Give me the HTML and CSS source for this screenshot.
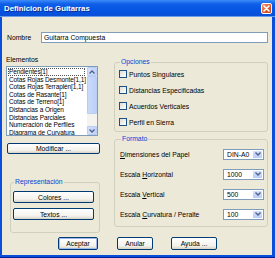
FILE: index.html
```html
<!DOCTYPE html>
<html lang="es">
<head>
    <meta charset="UTF-8">
    <title>Definicion de Guitarras</title>
    <link rel="stylesheet" href="styles.css">
</head>
<body>
<div class="window">
    <div class="titlebar">
        <span class="title">Definicion de Guitarras</span>
        <span class="close">
            <svg width="9" height="9" viewBox="0 0 9 9"><path d="M2 2 L7 7 M7 2 L2 7" stroke="#fff" stroke-width="1.6" stroke-linecap="round"/></svg>
        </span>
    </div>
    <div class="client">
        <!-- Nombre -->
        <div class="name-row">
            <span class="name-label">Nombre</span>
            <div class="textbox">Guitarra Compuesta</div>
        </div>

        <div class="main">
            <div class="left">
                <div class="caption">Elementos</div>
                <div class="listbox">
                    <ul class="items">
                        <li class="focused">Pendientes[1]</li>
                        <li>Cotas Rojas Desmonte[1,1]</li>
                        <li>Cotas Rojas Terraplén[1,1]</li>
                        <li>Cotas de Rasante[1]</li>
                        <li>Cotas de Terreno[1]</li>
                        <li>Distancias a Origen</li>
                        <li>Distancias Parciales</li>
                        <li>Numeración de Perfiles</li>
                        <li>Diagrama de Curvatura</li>
                    </ul>
                    <div class="vscroll">
                        <span class="sb-btn"><svg width="6" height="4" viewBox="0 0 6 4"><path d="M0.5 3.5 L3 1 L5.5 3.5" fill="none" stroke="#4D6185" stroke-width="1.3"/></svg></span>
                        <span class="sb-thumb"></span>
                        <span class="sb-track"></span>
                        <span class="sb-btn"><svg width="6" height="4" viewBox="0 0 6 4"><path d="M0.5 0.5 L3 3 L5.5 0.5" fill="none" stroke="#4D6185" stroke-width="1.3"/></svg></span>
                    </div>
                </div>
                <button class="btn modify">Modificar ...</button>

                <fieldset class="group repr">
                    <legend>Representación</legend>
                    <button class="btn">Colores ...</button>
                    <button class="btn">Textos ...</button>
                </fieldset>
            </div>

            <div class="right">
                <fieldset class="group options">
                    <legend>Opciones</legend>
                    <div class="check-row"><span class="checkbox"></span>Puntos Singulares</div>
                    <div class="check-row"><span class="checkbox"></span>Distancias Especificadas</div>
                    <div class="check-row"><span class="checkbox"></span>Acuerdos Verticales</div>
                    <div class="check-row"><span class="checkbox"></span>Perfil en Sierra</div>
                </fieldset>

                <fieldset class="group format">
                    <legend>Formato</legend>
                    <div class="field-row">
                        <span><u>D</u>imensiones del Papel</span>
                        <div class="combo"><span class="value">DIN-A0</span><span class="drop"><svg width="6" height="4" viewBox="0 0 6 4"><path d="M0.5 0.5 L3 3 L5.5 0.5" fill="none" stroke="#4D6185" stroke-width="1.3"/></svg></span></div>
                    </div>
                    <div class="field-row">
                        <span>Escala <u>H</u>orizontal</span>
                        <div class="combo"><span class="value">1000</span><span class="drop"><svg width="6" height="4" viewBox="0 0 6 4"><path d="M0.5 0.5 L3 3 L5.5 0.5" fill="none" stroke="#4D6185" stroke-width="1.3"/></svg></span></div>
                    </div>
                    <div class="field-row">
                        <span>Escala <u>V</u>ertical</span>
                        <div class="combo"><span class="value">500</span><span class="drop"><svg width="6" height="4" viewBox="0 0 6 4"><path d="M0.5 0.5 L3 3 L5.5 0.5" fill="none" stroke="#4D6185" stroke-width="1.3"/></svg></span></div>
                    </div>
                    <div class="field-row">
                        <span>Escala <u>C</u>urvatura / Peralte</span>
                        <div class="combo"><span class="value">100</span><span class="drop"><svg width="6" height="4" viewBox="0 0 6 4"><path d="M0.5 0.5 L3 3 L5.5 0.5" fill="none" stroke="#4D6185" stroke-width="1.3"/></svg></span></div>
                    </div>
                </fieldset>
            </div>
        </div>

        <!-- Botones -->
        <div class="actions">
            <button class="btn default accept">Aceptar</button>
            <button class="btn cancel">Anular</button>
            <button class="btn help">Ayuda ...</button>
        </div>
    </div>
</div>
</body>
</html>
```

FILE: styles.css
```css
body {
    margin: 0;
    font-family: "Liberation Sans", Arial, sans-serif;
    font-size: 6.8px;
    color: #000;
    background-color: #fff;
}
.window {
    width: 275px;
    height: 258px;
    box-sizing: border-box;
    display: flex;
    flex-direction: column;
    background-color: #0A4FDB;
    padding: 0 3px 3px 2px;
    box-shadow: inset 0 -1px 0 #00209A;
}
.titlebar {
    height: 17px;
    margin: 0 -3px 0 -2px;
    padding: 0 3px 0 4px;
    display: flex;
    align-items: center;
    justify-content: space-between;
    background: linear-gradient(#3C8CF8 0%, #0F5EE8 25%, #0453E2 70%, #0A4ED6 100%);
    border-bottom: 1px solid #6C9CEC;
    box-sizing: border-box;
}
.title {
    color: #fff;
    font-weight: bold;
    font-size: 7.8px;
    text-shadow: 1px 1px #0B2C8C;
}
.close {
    width: 11px;
    height: 11px;
    box-sizing: border-box;
    border: 1px solid #fff;
    border-radius: 2px;
    background: linear-gradient(135deg, #F2987A, #E25A2A 55%, #C8431C);
    display: flex;
    align-items: center;
    justify-content: center;
}
.client {
    flex: 1;
    background-color: #ECE9D8;
    padding: 15px 4px 5px 4px;
    display: flex;
    flex-direction: column;
}
.name-row {
    display: flex;
    align-items: center;
    height: 11px;
}
.name-label {
    width: 34px;
    padding-left: 1px;
}
.textbox {
    flex: 1;
    height: 11px;
    box-sizing: border-box;
    border: 1px solid #7F9DB9;
    background-color: #fff;
    padding: 0 2px;
    line-height: 9px;
}
.main {
    display: flex;
    gap: 14px;
}
.left {
    width: 94px;
    display: flex;
    flex-direction: column;
}
.right {
    width: 154px;
    display: flex;
    flex-direction: column;
}
.caption {
    margin-top: 13px;
    height: 8px;
    line-height: 8px;
}
.listbox {
    margin-top: 2px;
    width: 92px;
    height: 70px;
    box-sizing: border-box;
    border: 1px solid #7F9DB9;
    background-color: #fff;
    display: flex;
}
.items {
    flex: 1;
    list-style: none;
    margin: 0;
    padding: 1px 0 1px 1px;
    font-size: 6.5px;
    line-height: 7.6px;
    letter-spacing: -0.1px;
    white-space: nowrap;
    overflow: hidden;
}
.items li {
    padding-left: 1px;
}
.items li.focused {
    outline: 1px dotted #555;
    outline-offset: -1px;
    width: 76px;
}
.vscroll {
    width: 10px;
    flex-shrink: 0;
    display: flex;
    flex-direction: column;
    background-color: #F4F3EE;
}
.sb-btn {
    height: 9px;
    box-sizing: border-box;
    border: 1px solid #B8CCF4;
    border-radius: 1px;
    background: linear-gradient(90deg, #D3E0FC, #C0D2FA);
    display: flex;
    align-items: center;
    justify-content: center;
}
.sb-thumb {
    height: 38px;
    box-sizing: border-box;
    border: 1px solid #B8CCF4;
    border-radius: 1px;
    background: linear-gradient(90deg, #CADAFB, #BCD0F9);
}
.sb-track {
    flex: 1;
}
.btn {
    font-family: "Liberation Sans", Arial, sans-serif;
    font-size: 6.8px;
    color: #000;
    height: 11px;
    padding: 0;
    box-sizing: border-box;
    border: 1px solid #003C74;
    border-radius: 2px;
    background: linear-gradient(#FFFFFF, #F3F2EC 70%, #D8D2C6);
    line-height: 9px;
    cursor: pointer;
}
.modify {
    margin-top: 7px;
    margin-left: 1px;
    width: 93px;
}
.group {
    margin: 0;
    border: 1px solid #D0D0BF;
    border-radius: 3px;
    box-sizing: border-box;
}
.group legend {
    color: #0046D5;
    padding: 0 1px;
    line-height: 8px;
    margin-left: 1px;
}
.repr {
    margin-top: 24px;
    margin-left: 4px;
    width: 90px;
    padding: 5px 5px 12px 2px;
    display: flex;
    flex-direction: column;
    gap: 5px;
}
.repr .btn {
    width: 81px;
    height: 12px;
}
.options {
    margin-top: 15px;
    padding: 0 3px 1px 4px;
}
.check-row {
    height: 16px;
    display: flex;
    align-items: center;
    gap: 2px;
}
.checkbox {
    width: 8px;
    height: 8px;
    box-sizing: border-box;
    border: 1px solid #1C5180;
    background: linear-gradient(135deg, #DCDCD7, #FFFFFF);
}
.format {
    margin-top: 3px;
    padding: 1px 3px 2px 5px;
}
.field-row {
    height: 20px;
    display: flex;
    align-items: center;
    justify-content: space-between;
}
.combo {
    width: 41px;
    height: 11px;
    box-sizing: border-box;
    border: 1px solid #7F9DB9;
    background-color: #fff;
    display: flex;
    align-items: stretch;
}
.combo .value {
    flex: 1;
    padding-left: 3px;
    line-height: 9px;
}
.combo .drop {
    width: 9px;
    border: 1px solid #fff;
    border-radius: 1px;
    background: linear-gradient(#D6E2FC, #B9CDF9);
    display: flex;
    align-items: center;
    justify-content: center;
}
.actions {
    margin-top: auto;
    display: flex;
    padding-left: 52px;
}
.actions .btn {
    height: 13px;
}
.accept {
    width: 40px;
}
.cancel {
    width: 36px;
    margin-left: 19px;
}
.help {
    width: 46px;
    margin-left: 18px;
}
.default {
    box-shadow: inset 0 0 0 1px #9EB8EE;
}
```
